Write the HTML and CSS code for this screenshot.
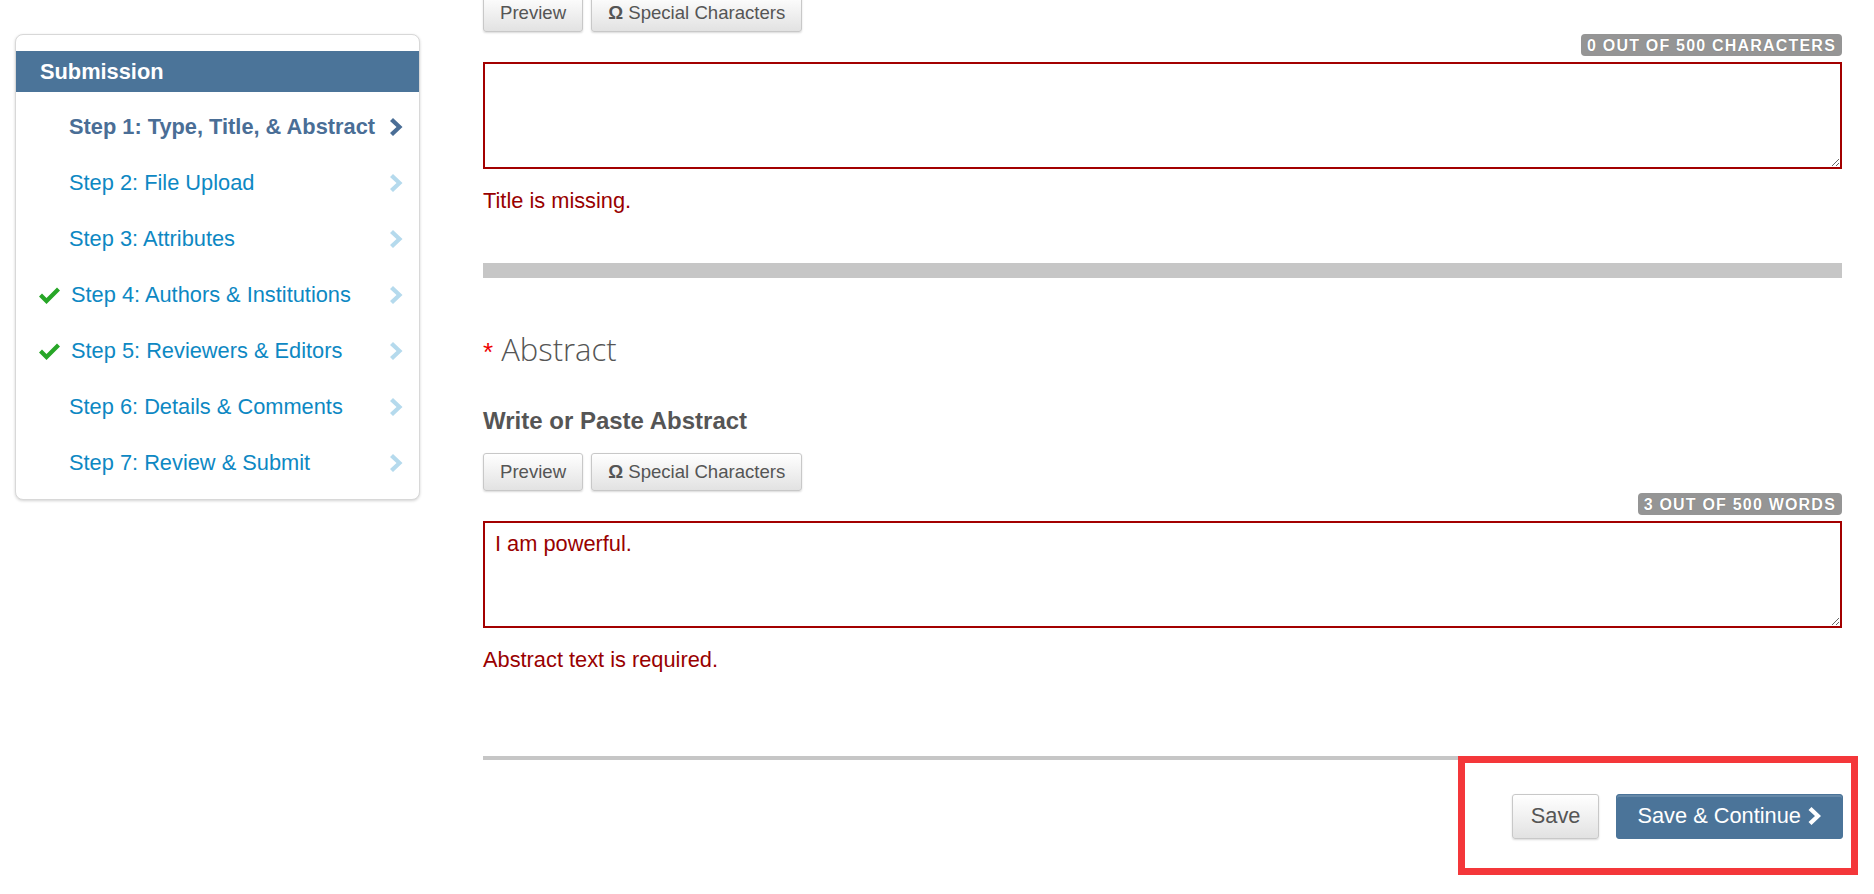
FILE: index.html
```html
<!DOCTYPE html>
<html lang="en">
<head>
    <meta charset="UTF-8">
    <meta name="viewport" content="width=device-width, initial-scale=1.0">
    <title>Submission - Step 1</title>
    <link rel="stylesheet" href="styles.css">
</head>
<body>
    <div class="page">
        <!-- left: submission steps -->
        <aside class="steps-card">
            <div class="steps-title">Submission</div>
            <ul class="steps">
                <li class="step active">
                    <span class="step-mark"></span>
                    <span class="step-label">Step 1: Type, Title, &amp; Abstract</span>
                    <svg class="chev" viewBox="0 0 13 18"><polygon points="3,0 12.5,9 3,18 0,15 6.5,9 0,3"/></svg>
                </li>
                <li class="step">
                    <span class="step-mark"></span>
                    <span class="step-label">Step 2: File Upload</span>
                    <svg class="chev" viewBox="0 0 13 18"><polygon points="3,0 12.5,9 3,18 0,15 6.5,9 0,3"/></svg>
                </li>
                <li class="step">
                    <span class="step-mark"></span>
                    <span class="step-label">Step 3: Attributes</span>
                    <svg class="chev" viewBox="0 0 13 18"><polygon points="3,0 12.5,9 3,18 0,15 6.5,9 0,3"/></svg>
                </li>
                <li class="step done">
                    <span class="step-mark"><svg class="check" viewBox="0 0 21 17"><polygon points="0,9.5 3,6.5 7.5,11 18,0.5 21,3.5 7.5,17"/></svg></span>
                    <span class="step-label">Step 4: Authors &amp; Institutions</span>
                    <svg class="chev" viewBox="0 0 13 18"><polygon points="3,0 12.5,9 3,18 0,15 6.5,9 0,3"/></svg>
                </li>
                <li class="step done">
                    <span class="step-mark"><svg class="check" viewBox="0 0 21 17"><polygon points="0,9.5 3,6.5 7.5,11 18,0.5 21,3.5 7.5,17"/></svg></span>
                    <span class="step-label">Step 5: Reviewers &amp; Editors</span>
                    <svg class="chev" viewBox="0 0 13 18"><polygon points="3,0 12.5,9 3,18 0,15 6.5,9 0,3"/></svg>
                </li>
                <li class="step">
                    <span class="step-mark"></span>
                    <span class="step-label">Step 6: Details &amp; Comments</span>
                    <svg class="chev" viewBox="0 0 13 18"><polygon points="3,0 12.5,9 3,18 0,15 6.5,9 0,3"/></svg>
                </li>
                <li class="step">
                    <span class="step-mark"></span>
                    <span class="step-label">Step 7: Review &amp; Submit</span>
                    <svg class="chev" viewBox="0 0 13 18"><polygon points="3,0 12.5,9 3,18 0,15 6.5,9 0,3"/></svg>
                </li>
            </ul>
        </aside>

        <!-- right: form -->
        <main class="form">
            <div class="field">
                <div class="toolbar">
                    <button class="btn" type="button">Preview</button>
                    <button class="btn" type="button"><b>Ω</b> Special Characters</button>
                </div>
                <div class="counter-row"><span class="counter">0 out of 500 characters</span></div>
                <textarea class="editor"></textarea>
                <p class="error">Title is missing.</p>
            </div>

            <div class="section-bar"></div>

            <h2 class="section-title"><span class="req">*</span> Abstract</h2>
            <h4 class="field-label">Write or Paste Abstract</h4>

            <div class="field">
                <div class="toolbar">
                    <button class="btn" type="button">Preview</button>
                    <button class="btn" type="button"><b>Ω</b> Special Characters</button>
                </div>
                <div class="counter-row"><span class="counter">3 out of 500 words</span></div>
                <textarea class="editor">I am powerful.</textarea>
                <p class="error">Abstract text is required.</p>
            </div>

            <div class="footer-rule"></div>

            <div class="actions">
                <div class="actions-inner">
                    <button class="btn btn-lg" type="button">Save</button>
                    <button class="btn btn-lg btn-primary" type="button">Save &amp; Continue
                        <svg class="chev-white" viewBox="0 0 13 18"><polygon points="3,0 12.5,9 3,18 0,15 6.5,9 0,3"/></svg>
                    </button>
                    <div class="highlight"></div>
                </div>
            </div>
        </main>
    </div>
</body>
</html>
```

FILE: styles.css
```css
:root {
    --brand: #4b7499;
    --brand-dark: #4a6e96;
    --link: #0d88c3;
    --link-soft: #b5daed;
    --error: #990000;
    --error-border: #a30000;
    --text: #555555;
    --rule: #c6c6c6;
}
* {
    box-sizing: border-box;
}
body {
    margin: 0;
    background: #ffffff;
    font-family: "Liberation Sans", Arial, sans-serif;
    font-size: 21.8px;
    color: var(--text);
}
.page {
    display: flex;
    align-items: flex-start;
    gap: 63px;
    min-height: 894px;
    padding-left: 15px;
}

/* steps card */
.steps-card {
    width: 405px;
    flex: none;
    margin-top: 34px;
    padding: 16px 0 8px;
    background: #fff;
    border: 1px solid #d8d8d8;
    border-radius: 8px;
    box-shadow: 0 1px 3px rgba(0,0,0,0.18);
}
.steps-title {
    height: 41px;
    line-height: 41px;
    padding-left: 24px;
    background: var(--brand);
    color: #fff;
    font-weight: bold;
}
.steps {
    list-style: none;
    margin: 7px 0 0;
    padding: 0;
}
.step {
    display: flex;
    align-items: center;
    height: 56px;
    padding: 0 16px 0 23px;
    color: var(--link);
}
.step-mark {
    width: 30px;
    flex: none;
    display: flex;
    align-items: center;
}
.step.done .step-mark {
    width: 32px;
}
.check {
    width: 21px;
    height: 17px;
    fill: #27a627;
}
.step-label {
    flex: 1;
    white-space: nowrap;
}
.chev {
    width: 13px;
    height: 18px;
    fill: var(--link-soft);
}
.step.active {
    color: var(--brand-dark);
    font-weight: bold;
}
.step.active .chev {
    fill: var(--brand-dark);
}

/* form column */
.form {
    width: 1359px;
    flex: none;
    margin-top: -6px;
    padding-bottom: 60px;
}
.toolbar {
    display: flex;
    gap: 8px;
}
.btn {
    height: 38px;
    padding: 0 16px;
    font-family: inherit;
    font-size: 18.6px;
    color: var(--text);
    background: linear-gradient(#ffffff, #e2e2e2);
    border: 1px solid #c8c8c8;
    border-radius: 3px;
    box-shadow: 0 1px 2px rgba(0,0,0,0.15);
    cursor: pointer;
}
.btn b {
    font-weight: bold;
}
.counter-row {
    display: flex;
    justify-content: flex-end;
    margin-top: 2px;
}
.counter {
    height: 22px;
    line-height: 23px;
    padding: 0 6px;
    background: #959595;
    color: #fff;
    font-size: 16px;
    font-weight: bold;
    letter-spacing: 1.2px;
    text-transform: uppercase;
    border-radius: 4px;
    text-shadow: 0 0 1px rgba(0,0,0,0.3);
}
.editor {
    display: block;
    width: 100%;
    height: 107px;
    margin-top: 6px;
    padding: 8px 10px 6px;
    border: 2px solid var(--error-border);
    font-family: inherit;
    font-size: 21.8px;
    color: var(--error);
    resize: vertical;
    outline: none;
}
.error {
    margin: 17px 0 0;
    line-height: 1.42;
    color: var(--error);
}
.section-bar {
    height: 15px;
    margin-top: 46px;
    background: var(--rule);
}
.section-title {
    margin: 53px 0 0;
    font-family: "Open Sans", sans-serif;
    font-weight: 300;
    font-size: 31px;
    line-height: 36px;
    color: var(--text);
}
.req {
    color: #ee0000;
    font-family: "Liberation Sans", Arial, sans-serif;
    font-size: 26px;
    font-weight: normal;
}
.field-label {
    margin: 37px 0 17px;
    font-size: 24px;
    line-height: 1.2;
    font-weight: bold;
    color: var(--text);
}
.footer-rule {
    height: 4px;
    margin-top: 80px;
    background: var(--rule);
}
.actions {
    display: flex;
    justify-content: flex-end;
    margin-top: 34px;
    margin-right: -1px;
}
.actions-inner {
    position: relative;
    display: flex;
    gap: 17px;
}
.btn-lg {
    height: 45px;
    padding: 0 18px;
    font-size: 21.8px;
}
.btn-primary {
    display: flex;
    align-items: center;
    gap: 7px;
    padding: 0 20px;
    background: var(--brand);
    border-color: var(--brand);
    color: #fff;
    box-shadow: inset 0 2px 0 rgba(255,255,255,0.15);
}
.chev-white {
    width: 14px;
    height: 18px;
    fill: #fff;
}
.highlight {
    position: absolute;
    top: -38px;
    left: -54px;
    right: -15px;
    bottom: -36px;
    border: 7px solid #f4373a;
    pointer-events: none;
}
```
